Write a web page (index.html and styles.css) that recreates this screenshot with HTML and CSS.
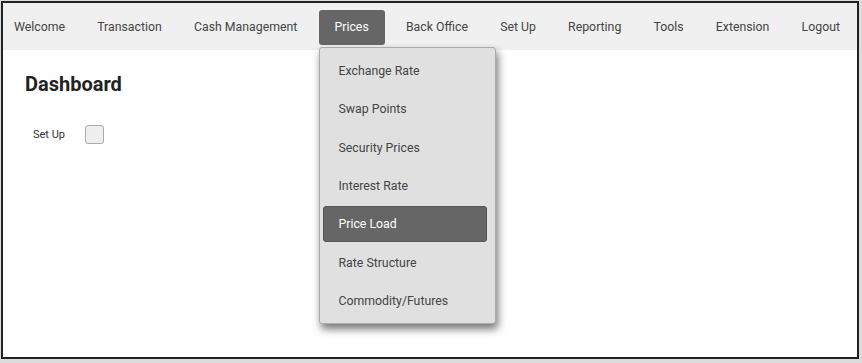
FILE: index.html
```html
<!DOCTYPE html>
<html>

<head>
    <meta charset="utf-8">
    <title>Dashboard</title>
    <link rel="stylesheet" href="styles.css">
</head>

<body>
    <div class="frame">
        <!-- top menu -->
        <ul class="nav">
            <li><a>Welcome</a></li>
            <li><a>Transaction</a></li>
            <li><a>Cash Management</a></li>
            <li class="has-menu">
                <a class="active">Prices</a>
                <!-- dropdown -->
                <ul class="menu">
                    <li><a>Exchange Rate</a></li>
                    <li><a>Swap Points</a></li>
                    <li><a>Security Prices</a></li>
                    <li><a>Interest Rate</a></li>
                    <li><a class="active">Price Load</a></li>
                    <li><a>Rate Structure</a></li>
                    <li><a>Commodity/Futures</a></li>
                </ul>
            </li>
            <li><a>Back Office</a></li>
            <li><a>Set Up</a></li>
            <li><a>Reporting</a></li>
            <li><a>Tools</a></li>
            <li><a>Extension</a></li>
            <li><a>Logout</a></li>
        </ul>

        <div class="content">
            <h1>Dashboard</h1>
            <label class="field">
                <span>Set Up</span>
                <span class="check"></span>
            </label>
        </div>
    </div>
</body>

</html>
```

FILE: styles.css
```css
* {
    box-sizing: border-box;
}

html,
body {
    margin: 0;
    padding: 0;
    background-color: #dcdcdc;
    font-family: Roboto, "Liberation Sans", sans-serif;
}

ul {
    margin: 0;
    padding: 0;
    list-style: none;
}

.frame {
    width: 858px;
    height: 358px;
    margin: 1px;
    border: 2px solid #222;
    background-color: #fff;
}

.nav {
    display: flex;
    align-items: center;
    justify-content: space-between;
    height: 47px;
    padding: 7px 6px 5px 0;
    background-color: #f0f0f0;
}

.nav>li>a {
    display: block;
    height: 35px;
    padding: 0 11px;
    line-height: 35px;
    font-size: 12.3px;
    color: #444;
    white-space: nowrap;
    border-radius: 3px;
}

.nav>li>a.active {
    padding: 0 16px;
    background-color: #666;
    color: #fff;
}

.has-menu {
    position: relative;
}

.menu {
    position: absolute;
    top: 37px;
    left: 0;
    width: 177px;
    padding: 5px 8px 4px 3px;
    background-color: #e0e0e0;
    border: 1px solid #aaa;
    border-radius: 3px;
    box-shadow: 2px 5px 8px rgba(0, 0, 0, 0.55);
    z-index: 100;
}

.menu>li {
    margin-bottom: 2.33px;
}

.menu>li:last-child {
    margin-bottom: 0;
}

.menu>li>a {
    display: block;
    height: 36px;
    padding: 0 16px;
    line-height: 36px;
    font-size: 12.3px;
    color: #444;
    white-space: nowrap;
    border-radius: 3px;
}

.menu>li>a.active {
    background-color: #666;
    color: #fff;
    border: 1px solid #555;
    line-height: 34px;
    padding-left: 15px;
}

.content {
    padding: 22px 22px;
}

.content h1 {
    margin: 0 0 29px 0;
    font-size: 20px;
    font-weight: bold;
    color: #222;
}

.field {
    display: flex;
    align-items: center;
    gap: 20px;
    padding-left: 8px;
    font-size: 11px;
    color: #333;
}

.check {
    display: block;
    width: 19px;
    height: 19px;
    background-color: #eee;
    border: 1px solid #aaa;
    border-radius: 3px;
}
```
